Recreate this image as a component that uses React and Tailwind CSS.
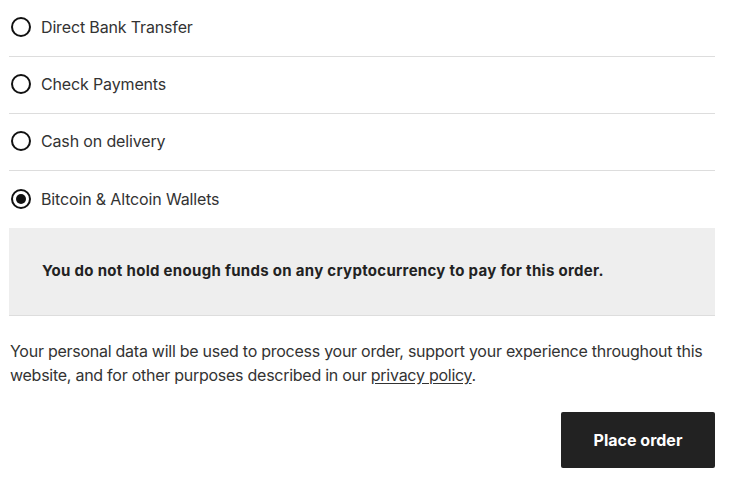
const methods = [
  { id: 'bacs', label: 'Direct Bank Transfer' },
  { id: 'cheque', label: 'Check Payments' },
  { id: 'cod', label: 'Cash on delivery' },
  { id: 'crypto', label: 'Bitcoin & Altcoin Wallets' },
];

function Radio({ checked }) {
  return (
    <span className="flex h-[20px] w-[20px] shrink-0 items-center justify-center rounded-full border-2 border-[#111]">
      {checked && <span className="h-[10px] w-[10px] rounded-full bg-[#111]" />}
    </span>
  );
}

export default function App() {
  const selected = 'crypto';

  return (
    <div className="min-h-screen bg-white text-[#333]" style={{ fontFamily: 'Inter, "Liberation Sans", sans-serif' }}>
      <div className="ml-[9px] w-[706px]">
        <ul>
          {methods.map((m, i) => (
            <li key={m.id} className={`flex h-[57px] items-center gap-[10px] pb-[2px] pl-[2px] ${i < methods.length - 1 ? 'border-b border-[#ddd]' : ''}`}>
              <Radio checked={m.id === selected} />
              <span className="text-[16px] tracking-[-0.15px]">{m.label}</span>
            </li>
          ))}
        </ul>
        <div className="flex h-[88px] items-center border-b border-[#ddd] bg-[#eee] pl-[33px]">
          <p className="text-[15px] font-bold tracking-[0.3px] text-[#222]">
            You do not hold enough funds on any cryptocurrency to pay for this order.
          </p>
        </div>
        <p className="mt-[23px] pl-[1px] text-[16px] leading-[24px] tracking-[-0.26px]">
          Your personal data will be used to process your order, support your experience throughout this website, and for other purposes described in our{' '}
          <a href="#" className="underline underline-offset-2">privacy policy</a>.
        </p>
        <div className="mt-[25px] flex justify-end">
          <button className="h-[56px] w-[154px] rounded-[2px] bg-[#222] text-[16px] font-bold text-white">
            Place order
          </button>
        </div>
      </div>
    </div>
  );
}
